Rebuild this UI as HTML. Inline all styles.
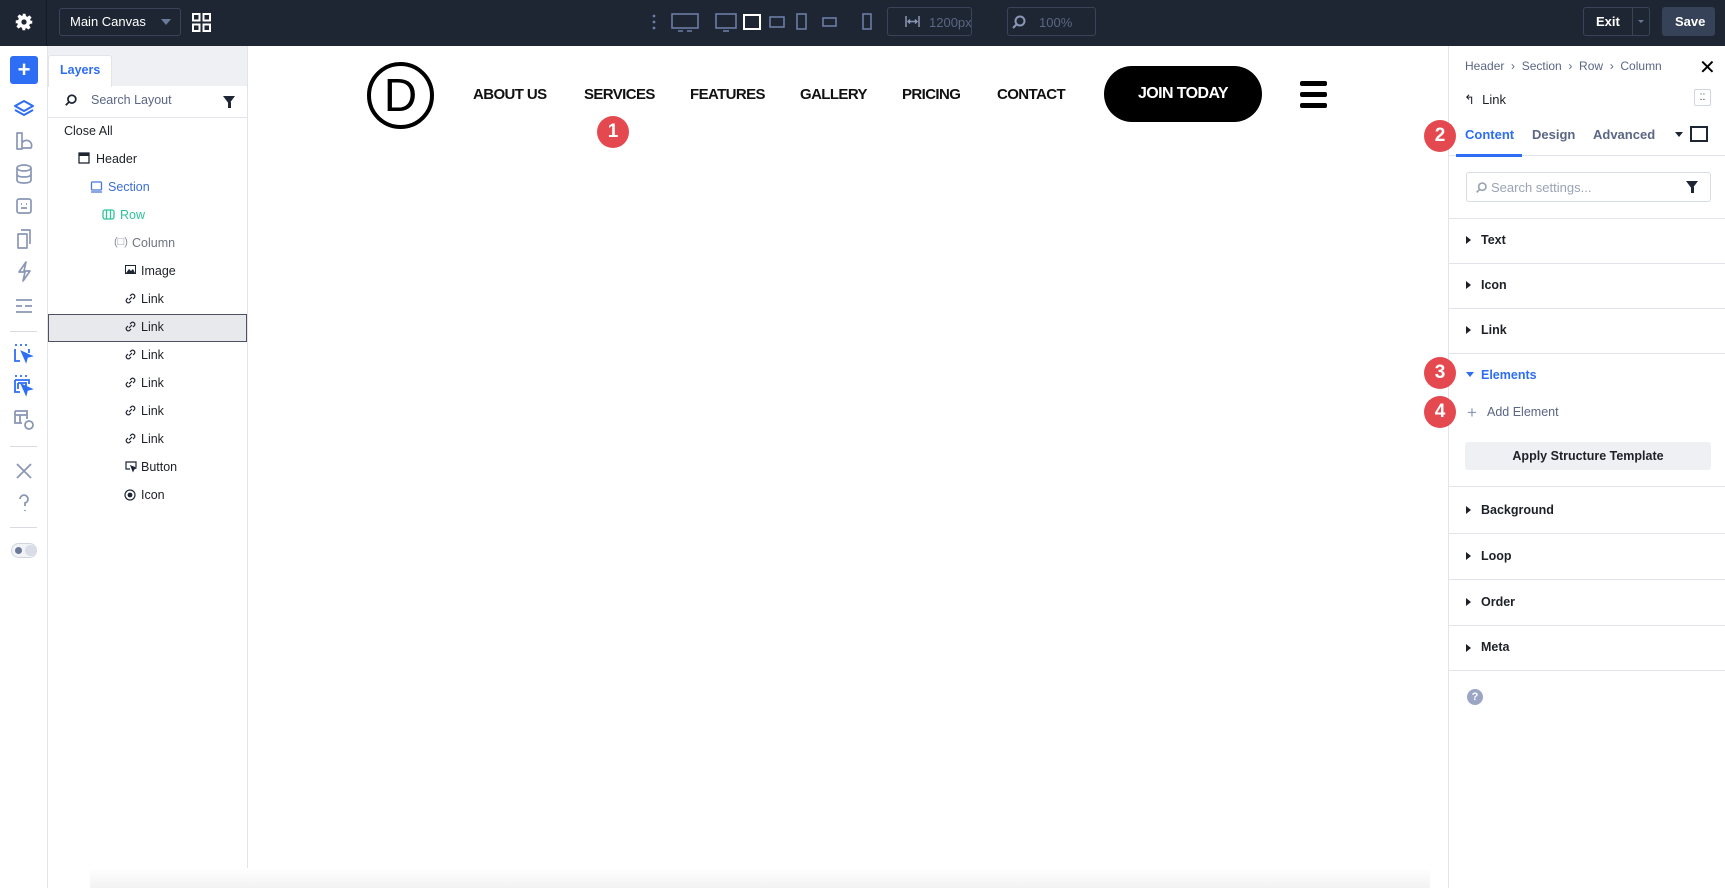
<!DOCTYPE html>
<html><head><meta charset="utf-8"><style>
*{box-sizing:border-box;margin:0;padding:0}
body{width:1725px;height:888px;overflow:hidden;background:#fff;font-family:"Liberation Sans",sans-serif;position:relative;color:#1d2127}
.a{position:absolute}
.top{left:0;top:0;width:1725px;height:46px;background:#1f2633}
.box{border:1px solid #39445a;border-radius:3px}
.t{font-size:13px;white-space:nowrap}
.lay{font-size:12.5px;color:#1d2127}
.sep{position:absolute;left:10px;width:27px;height:1px;background:#d8dbe2}
.sect{position:absolute;left:1449px;width:276px;height:1px;background:#e1e4ea}
.sh{position:absolute;left:1466px;font-size:12.5px;font-weight:bold;color:#1d2127}
.tri{position:absolute;left:1466px;width:0;height:0;border-top:4px solid transparent;border-bottom:4px solid transparent;border-left:5px solid #1d2127}
.badge{position:absolute;width:32px;height:32px;border-radius:50%;background:#e4494f;color:#fff;font-weight:bold;font-size:19px;display:flex;align-items:center;justify-content:center}
.nav{position:absolute;top:86px;font-size:15px;font-weight:bold;color:#111;letter-spacing:-0.6px;white-space:nowrap}
</style></head><body>
<div class="a top"></div>
<div class="a" style="left:46px;top:0;width:1px;height:46px;background:#141a24"></div>
<svg class="a" style="left:15px;top:13px" width="18" height="18" viewBox="0 0 24 24"><path fill="#fff" d="M10 1h4l.6 3.2 2 .9 2.7-1.9 2.8 2.8-1.9 2.7.9 2L23 10v4l-3.2.6-.9 2 1.9 2.7-2.8 2.8-2.7-1.9-2 .9L14 23h-4l-.6-3.2-2-.9-2.7 1.9-2.8-2.8 1.9-2.7-.9-2L1 14v-4l3.2-.6.9-2L3.2 4.7 6 1.9l2.7 1.9 2-.9z"/><circle cx="12" cy="12" r="3.5" fill="#1f2633"/></svg>
<div class="a box" style="left:59px;top:8px;width:122px;height:28px"></div>
<div class="a t" style="left:70px;top:14px;color:#fff">Main Canvas</div>
<div class="a" style="left:161px;top:19px;border-left:5px solid transparent;border-right:5px solid transparent;border-top:6px solid #6b7a99"></div>
<svg class="a" style="left:192px;top:13px" width="19" height="19" viewBox="0 0 19 19" fill="none" stroke="#fff" stroke-width="2"><rect x="1" y="1" width="6.5" height="6.5"/><rect x="11.5" y="1" width="6.5" height="6.5"/><rect x="1" y="11.5" width="6.5" height="6.5"/><rect x="11.5" y="11.5" width="6.5" height="6.5"/></svg>
<svg class="a" style="left:648px;top:12px" width="230" height="22" viewBox="0 0 230 22" fill="none" stroke="#6b7ca6" stroke-width="1.6">
<circle cx="6" cy="4" r="1.4" fill="#6b7ca6" stroke="none"/><circle cx="6" cy="10" r="1.4" fill="#6b7ca6" stroke="none"/><circle cx="6" cy="16" r="1.4" fill="#6b7ca6" stroke="none"/>
<rect x="24" y="2" width="26" height="14"/><path d="M30 19h5M39 19h5"/>
<rect x="68" y="2" width="20" height="14"/><path d="M75 19h6"/>
<rect x="96" y="3" width="16" height="14" stroke="#fff" stroke-width="2"/>
<rect x="122" y="5" width="14" height="10"/>
<rect x="149" y="2" width="9" height="15"/>
<rect x="175" y="6" width="13" height="8"/>
<rect x="215" y="2" width="8" height="15"/>
</svg>
<div class="a box" style="left:887px;top:7px;width:85px;height:29px"></div>
<svg class="a" style="left:905px;top:15px" width="15" height="13" viewBox="0 0 15 13" stroke="#8a97b5" stroke-width="1.5" fill="none"><path d="M1 1v11M14 1v11M3 6.5h9M5 4.5l-2 2 2 2M10 4.5l2 2-2 2"/></svg>
<div class="a t" style="left:929px;top:15px;color:#5a6684">1200px</div>
<div class="a box" style="left:1007px;top:7px;width:89px;height:29px"></div>
<svg class="a" style="left:1011px;top:14px" width="16" height="16" viewBox="0 0 16 16" fill="none" stroke="#8a97b5" stroke-width="2"><circle cx="9" cy="7" r="4.5"/><path d="M6 10l-4 4"/></svg>
<div class="a t" style="left:1039px;top:15px;color:#5a6684">100%</div>
<div class="a box" style="left:1583px;top:7px;width:67px;height:29px"></div>
<div class="a" style="left:1632px;top:8px;width:1px;height:27px;background:#39445a"></div>
<div class="a t" style="left:1596px;top:14px;color:#fff;font-weight:bold">Exit</div>
<div class="a" style="left:1638px;top:20px;border-left:3px solid transparent;border-right:3px solid transparent;border-top:3px solid #6b7a99"></div>
<div class="a" style="left:1662px;top:7px;width:53px;height:29px;background:#354257;border-radius:3px"></div>
<div class="a t" style="left:1675px;top:14px;color:#fff;font-weight:bold">Save</div>

<div class="a" style="left:0;top:46px;width:48px;height:842px;background:#fff;border-right:1px solid #e1e4ea"></div>
<div class="a" style="left:10px;top:56px;width:28px;height:28px;background:#2d6ef5;border-radius:3px;color:#fff;font-size:22px;font-weight:bold;text-align:center;line-height:27px">+</div>
<svg class="a" style="left:12px;top:98px" width="24" height="222" viewBox="0 0 24 222" fill="none" stroke="#8a97b5" stroke-width="1.7" stroke-linejoin="round">
<path d="M12 3l9 5-9 5-9-5z M3 12l9 5 9-5" stroke="#2d6ef5" stroke-width="2"/>
<path d="M5 35h5v16H5z M10 45a5 5 0 1 1 9 5h-9"/>
<ellipse cx="12" cy="70" rx="7" ry="3"/><path d="M5 70v12c0 2 3 3 7 3s7-1 7-3V70M5 76c0 2 3 3 7 3s7-1 7-3"/>
<rect x="5" y="101" width="14" height="14" rx="2"/><path d="M9 106h1M14 106h1M9 110h6"/>
<path d="M6 136h9v14H6z M9 132h9v14"/>
<path d="M14 164l-7 10h6l-2 9 7-10h-6z"/>
<path d="M4 202h16M4 208h6M13 208h7M4 214h16"/>
</svg>
<div class="sep" style="top:331px"></div>
<svg class="a" style="left:13px;top:343px" width="22" height="90" viewBox="0 0 22 90" fill="none" stroke="#2d6ef5" stroke-width="1.8">
<path d="M2 2h2M7 2h2M12 2h2"/><path d="M2 6v12h5M16 6v4"/><path d="M9 9l9 4-4 1-1 4z" fill="#2d6ef5"/>
<path d="M2 33h2M7 33h2M12 33h2"/><path d="M2 37h14v4M2 37v12h5"/><path d="M5 40h8v3M5 40v6"/><path d="M9 42l9 4-4 1-1 4z" fill="#2d6ef5"/>
<path d="M2 68h12v8M2 68v12h7M2 72h12M7 72v8" stroke="#8a97b5"/><circle cx="16" cy="82" r="4" stroke="#8a97b5"/>
</svg>
<div class="sep" style="top:446px"></div>
<svg class="a" style="left:14px;top:462px" width="20" height="60" viewBox="0 0 20 60" fill="none" stroke="#8a97b5" stroke-width="1.8"><path d="M3 2l14 14M17 2L3 16"/><path d="M6 37a4 4 0 1 1 5 4v3M11 48v1"/></svg>
<div class="sep" style="top:527px"></div>
<div class="a" style="left:11px;top:543px;width:26px;height:15px;border:1px solid #d0d5de;border-radius:8px;background:#f1f3f7"></div>
<div class="a" style="left:15px;top:547px;width:7px;height:7px;border-radius:50%;background:#6b7a99"></div>
<div class="a" style="left:25px;top:545px;width:11px;height:11px;border-radius:50%;background:#d7dce6"></div>

<div class="a" style="left:48px;top:46px;width:200px;height:842px;border-right:1px solid #e1e4ea"></div>
<div class="a" style="left:48px;top:46px;width:199px;height:40px;background:#eef0f4"></div>
<div class="a" style="left:48px;top:55px;width:64px;height:32px;background:#fff;border:1px solid #e1e4ea;border-bottom:none;border-radius:3px 3px 0 0"></div>
<div class="a lay" style="left:60px;top:63px;color:#2d6ef5;font-weight:bold">Layers</div>
<div class="a" style="left:48px;top:117px;width:199px;height:1px;background:#e1e4ea"></div>
<svg class="a" style="left:64px;top:93px" width="14" height="14" viewBox="0 0 16 16" fill="none" stroke="#1f2633" stroke-width="2"><circle cx="9" cy="7" r="4.5"/><path d="M6 10l-4 4"/></svg>
<div class="a lay" style="left:91px;top:93px;color:#5a6684">Search Layout</div>
<div class="a" style="left:223px;top:96px;border-left:6px solid transparent;border-right:6px solid transparent;border-top:8px solid #1f2633"></div>
<div class="a" style="left:228px;top:102px;width:3px;height:6px;background:#1f2633"></div>
<div class="a lay" style="left:64px;top:124px">Close All</div>
<div class="a" style="left:48px;top:314px;width:199px;height:28px;background:#e8e9ec;border:1.5px solid #4b5160"></div>
<svg class="a" style="left:78px;top:152px" width="12" height="12" viewBox="0 0 12 12"><rect x="1" y="1" width="10" height="10" fill="none" stroke="#1f2633" stroke-width="1.3"/><rect x="1" y="1" width="10" height="3" fill="#1f2633"/></svg>
<div class="a lay" style="left:96px;top:152px">Header</div>
<svg class="a" style="left:90px;top:180px" width="13" height="13" viewBox="0 0 13 13" fill="none" stroke="#4a78d8" stroke-width="1.3"><rect x="1.5" y="2" width="10" height="8" rx="1"/><path d="M1 12h11"/></svg>
<div class="a lay" style="left:108px;top:180px;color:#3b6fd6">Section</div>
<svg class="a" style="left:102px;top:208px" width="13" height="13" viewBox="0 0 13 13" fill="none" stroke="#2fc39a" stroke-width="1.3"><rect x="1" y="2" width="11" height="9" rx="2"/><path d="M4.5 2v9M8.5 2v9"/></svg>
<div class="a lay" style="left:120px;top:208px;color:#2fc39a">Row</div>
<div class="a lay" style="left:114px;top:236px;color:#8a8f99;font-size:11px">(□)</div>
<div class="a lay" style="left:132px;top:236px;color:#70757f">Column</div>
<svg class="a" style="left:125px;top:265px" width="11" height="9" viewBox="0 0 11 9"><rect x=".5" y=".5" width="10" height="8" fill="none" stroke="#1f2633"/><path d="M1 8l3-4 2 2 2-2 2 4z" fill="#1f2633"/></svg>
<div class="a lay" style="left:141px;top:264px">Image</div>
<svg class="a" style="left:124px;top:292px" width="13" height="160" viewBox="0 0 13 160" fill="none" stroke="#1f2633" stroke-width="1.2">
<g id="lk"><path d="M5 8l3-3M4 6L2.5 7.5a2.2 2.2 0 0 0 3 3L7 9M6 4l1.5-1.5a2.2 2.2 0 0 1 3 3L9 7"/></g>
<use href="#lk" y="28"/><use href="#lk" y="56"/><use href="#lk" y="84"/><use href="#lk" y="112"/><use href="#lk" y="140"/>
</svg>
<div class="a lay" style="left:141px;top:292px">Link</div>
<div class="a lay" style="left:141px;top:320px">Link</div>
<div class="a lay" style="left:141px;top:348px">Link</div>
<div class="a lay" style="left:141px;top:376px">Link</div>
<div class="a lay" style="left:141px;top:404px">Link</div>
<div class="a lay" style="left:141px;top:432px">Link</div>
<svg class="a" style="left:125px;top:461px" width="12" height="12" viewBox="0 0 12 12" fill="none" stroke="#1f2633" stroke-width="1.2"><path d="M5 8H1V1h10v5"/><path d="M6 5l5 2-2 1-1 2z" fill="#1f2633"/></svg>
<div class="a lay" style="left:141px;top:460px">Button</div>
<svg class="a" style="left:124px;top:489px" width="12" height="12" viewBox="0 0 12 12"><circle cx="6" cy="6" r="5" fill="none" stroke="#1f2633" stroke-width="1.2"/><circle cx="6" cy="6" r="2.4" fill="#1f2633"/></svg>
<div class="a lay" style="left:141px;top:488px">Icon</div>

<div class="a" style="left:90px;top:868px;width:1340px;height:20px;background:linear-gradient(#fff,#f2f2f2)"></div>
<div class="a" style="left:367px;top:62px;width:67px;height:67px;border:4px solid #000;border-radius:50%"></div>
<div class="a" style="left:367px;top:64px;width:67px;text-align:center;font-size:46px;line-height:62px;color:#000">D</div>
<div class="nav" style="left:473px">ABOUT US</div>
<div class="nav" style="left:584px">SERVICES</div>
<div class="nav" style="left:690px">FEATURES</div>
<div class="nav" style="left:800px">GALLERY</div>
<div class="nav" style="left:902px">PRICING</div>
<div class="nav" style="left:997px">CONTACT</div>
<div class="a" style="left:1104px;top:66px;width:158px;height:56px;background:#000;border-radius:28px;color:#fff;text-align:center;line-height:56px;font-size:16px;letter-spacing:-0.6px;font-weight:bold">JOIN TODAY</div>
<div class="a" style="left:1300px;top:81px;width:27px;height:4.5px;background:#000;border-radius:2px"></div>
<div class="a" style="left:1300px;top:92px;width:27px;height:4.5px;background:#000;border-radius:2px"></div>
<div class="a" style="left:1300px;top:103px;width:27px;height:4.5px;background:#000;border-radius:2px"></div>
<div class="badge" style="left:597px;top:116px">1</div>

<div class="a" style="left:1448px;top:46px;width:1px;height:842px;background:#e1e4ea"></div>
<div class="a" style="left:1465px;top:59px;font-size:12px;color:#5a6684;white-space:nowrap">Header &nbsp;›&nbsp; Section &nbsp;›&nbsp; Row &nbsp;›&nbsp; Column</div>
<div class="a" style="left:1699px;top:55px;font-size:20px;color:#000">✕</div>
<div class="a" style="left:1464px;top:92px;font-size:13px;color:#1d2127">↰ &nbsp;Link</div>
<div class="a" style="left:1694px;top:89px;width:17px;height:17px;border:1px solid #d0d5de;border-radius:2px;font-size:9px;text-align:center;line-height:14px;color:#1f2633">⁚⁚</div>
<div class="a" style="left:1465px;top:127px;font-size:13px;color:#2d6ef5;font-weight:bold">Content</div>
<div class="a" style="left:1532px;top:127px;font-size:13px;color:#5a6684;font-weight:bold">Design</div>
<div class="a" style="left:1593px;top:127px;font-size:13px;color:#5a6684;font-weight:bold">Advanced</div>
<div class="a" style="left:1675px;top:132px;border-left:4px solid transparent;border-right:4px solid transparent;border-top:5px solid #1f2633"></div>
<div class="a" style="left:1690px;top:126px;width:18px;height:16px;border:2px solid #1f2633"></div>
<div class="a" style="left:1449px;top:155px;width:276px;height:1px;background:#e1e4ea"></div>
<div class="a" style="left:1456px;top:154px;width:66px;height:2.5px;background:#2d6ef5"></div>
<div class="a" style="left:1466px;top:172px;width:245px;height:30px;border:1px solid #d8dce3;border-radius:3px"></div>
<svg class="a" style="left:1475px;top:181px" width="13" height="13" viewBox="0 0 16 16" fill="none" stroke="#9aa3b5" stroke-width="2"><circle cx="9" cy="7" r="4.5"/><path d="M6 10l-4 4"/></svg>
<div class="a" style="left:1491px;top:180px;font-size:13px;color:#9aa3b5">Search settings...</div>
<div class="a" style="left:1686px;top:181px;border-left:6px solid transparent;border-right:6px solid transparent;border-top:8px solid #1f2633"></div>
<div class="a" style="left:1691px;top:187px;width:3px;height:6px;background:#1f2633"></div>
<div class="sect" style="top:218px"></div>
<div class="tri" style="top:236px"></div><div class="sh" style="left:1481px;top:233px">Text</div>
<div class="sect" style="top:263px"></div>
<div class="tri" style="top:281px"></div><div class="sh" style="left:1481px;top:278px">Icon</div>
<div class="sect" style="top:308px"></div>
<div class="tri" style="top:326px"></div><div class="sh" style="left:1481px;top:323px">Link</div>
<div class="sect" style="top:353px"></div>
<div class="a" style="left:1466px;top:372px;border-left:4px solid transparent;border-right:4px solid transparent;border-top:5px solid #2d6ef5"></div>
<div class="sh" style="left:1481px;top:368px;color:#2d6ef5">Elements</div>
<div class="a" style="left:1467px;top:403px;font-size:17px;color:#8a97b5">+</div>
<div class="a" style="left:1487px;top:405px;font-size:12.5px;color:#5a6684">Add Element</div>
<div class="a" style="left:1465px;top:442px;width:246px;height:28px;background:#eef0f3;border-radius:3px;text-align:center;line-height:28px;font-size:12.5px;font-weight:bold;color:#1d2127">Apply Structure Template</div>
<div class="sect" style="top:486px"></div>
<div class="tri" style="top:506px"></div><div class="sh" style="left:1481px;top:503px">Background</div>
<div class="sect" style="top:533px"></div>
<div class="tri" style="top:552px"></div><div class="sh" style="left:1481px;top:549px">Loop</div>
<div class="sect" style="top:579px"></div>
<div class="tri" style="top:598px"></div><div class="sh" style="left:1481px;top:595px">Order</div>
<div class="sect" style="top:625px"></div>
<div class="tri" style="top:644px"></div><div class="sh" style="left:1481px;top:640px">Meta</div>
<div class="sect" style="top:670px"></div>
<div class="a" style="left:1467px;top:689px;width:16px;height:16px;border-radius:50%;background:#9aa6c4;color:#fff;font-size:11px;font-weight:bold;text-align:center;line-height:16px">?</div>
<div class="badge" style="left:1424px;top:120px">2</div>
<div class="badge" style="left:1424px;top:357px">3</div>
<div class="badge" style="left:1424px;top:396px">4</div>
</body></html>
